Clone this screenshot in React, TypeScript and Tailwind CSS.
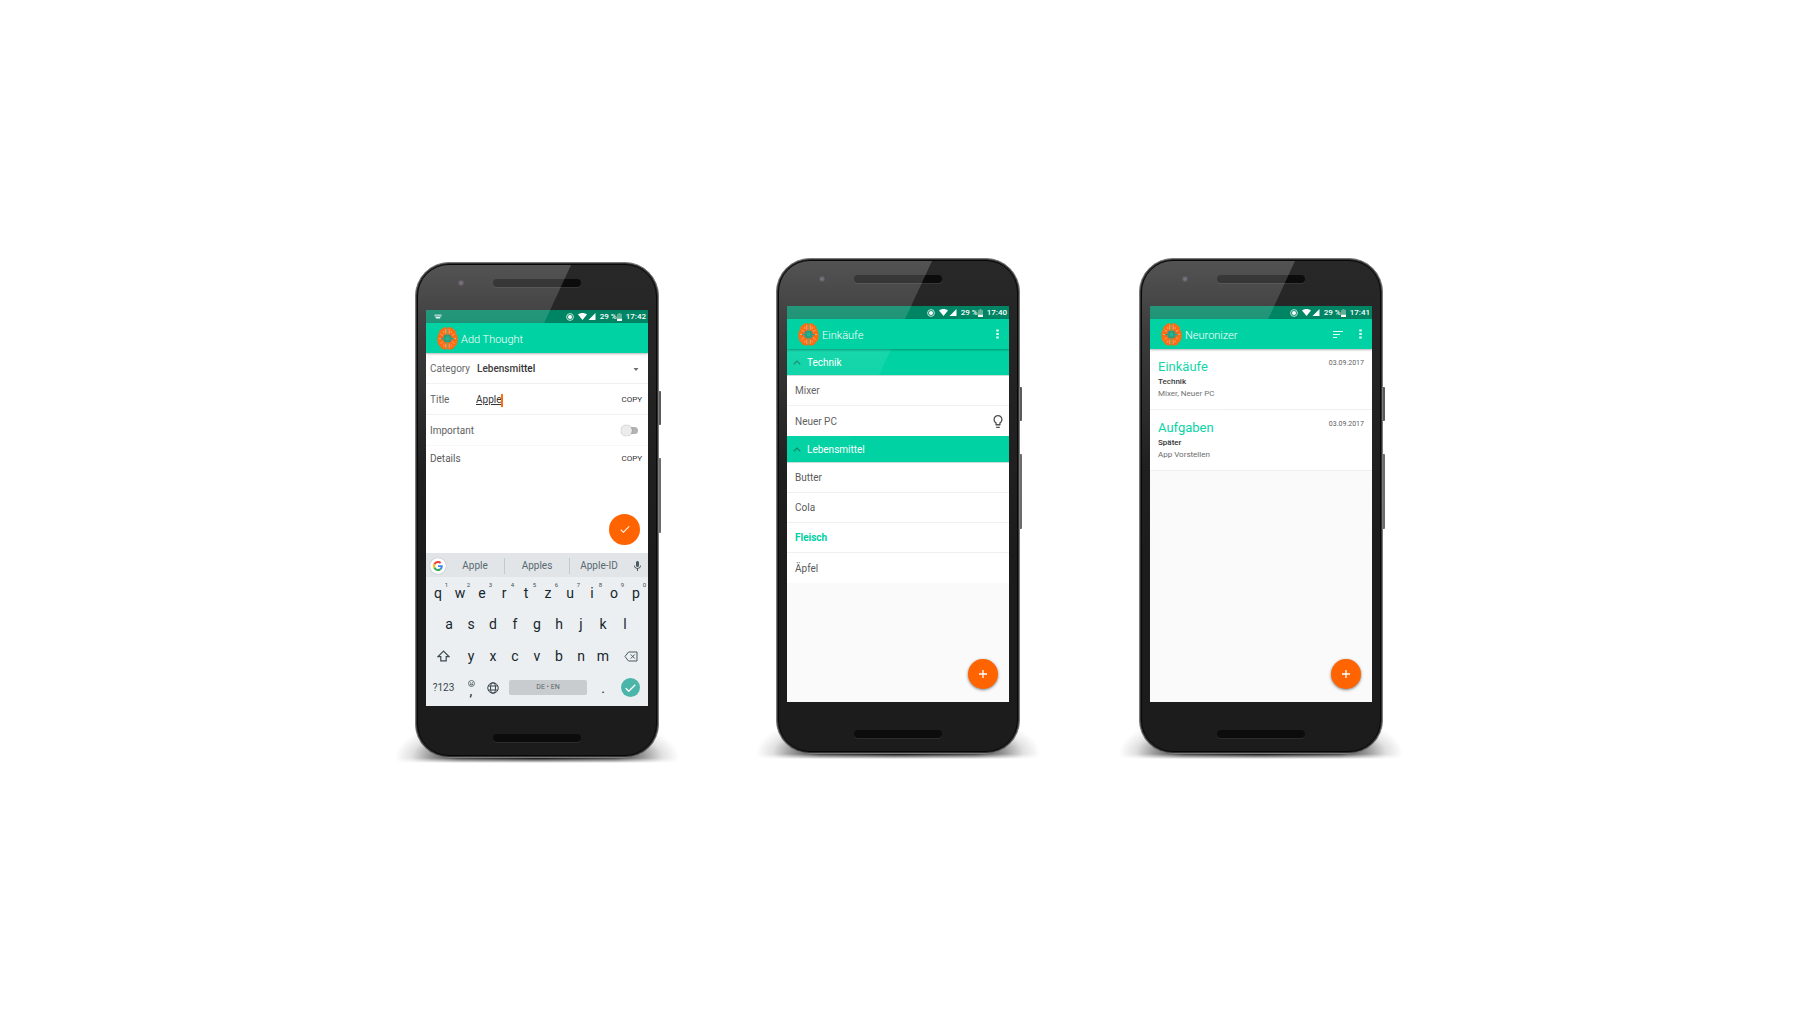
import type { ReactNode } from "react";

function BrainLogo() {
  return (
    <svg viewBox="0 0 42 46" className="h-[23px] w-[21px] shrink-0" aria-hidden="true">
      <path d="M20.500 1.500C17-.5 12 .5 10 4 6 5.500 4 9 4 13 1 17 0 23 1 28c0 5 2 9 5.500 10.500C8 43 12 45.500 16 45c2.500.5 4.500-.5 4.500-2z" fill="#ff6c12" />
      <path d="M21.500 1.500C25-.5 30 .5 32 4c4 1.500 6 5 6 9 3 4 4 10 3 15 0 5-2 9-5.500 10.500C34 43 30 45.500 26 45c-2.500.5-4.500-.5-4.500-2z" fill="#ff6c12" />
      <g stroke="#f6c09a" strokeWidth="1.300" fill="none">
        <path d="M17.500 14V4M13.500 12V8M24.500 14V4M28.500 12V8M17.500 33v9M24.500 33v9M13.500 35v4M28.500 35v4" />
        <path d="M12 17L7 14M9 23H4M12 29l-5 4M30 17l5-3M33 23h5M30 29l5 4" />
      </g>
      <path
        d="M15 20h-4M15 26h-4M27 20h4M27 26h4M18 17v-4M24 17v-4M18 29v4M24 29v4"
        stroke="#3a9c80"
        strokeWidth="1.600"
      />
      <path d="M8 23h6M28 23h6" stroke="#3a9c80" strokeWidth="2.500" />
      <rect x="14" y="16" width="14" height="14" rx="2" fill="#2a9d82" />
      <rect x="17.500" y="19.500" width="7" height="7" fill="#22b593" />
    </svg>
  );
}

function StatusBar({ time, keyboard = false }: { time: string; keyboard?: boolean }) {
  return (
    <div className="flex h-[13px] items-center bg-[#008564] pr-[2px] pl-2 text-[8px] leading-[13px] font-medium text-white">
      {keyboard && (
        <svg viewBox="0 0 16 12" className="h-[6px] w-[8px]" aria-hidden="true">
          <path d="M1 1h14v4H1z" fill="#b9dcd2" />
          <path d="M2 3h12" stroke="#258f74" strokeWidth="1" strokeDasharray="1.500 1" />
          <path d="M3 6h10l-1 3H4z" fill="#e6f5f1" />
        </svg>
      )}
      <svg viewBox="0 0 16 16" className="mr-[4px] ml-auto h-[8px] w-[8px]" aria-hidden="true">
        <circle cx="8" cy="8" r="6.800" fill="none" stroke="#d5ece6" strokeWidth="1.800" />
        <circle cx="8" cy="8" r="4" fill="#fff" />
      </svg>
      <svg viewBox="0 0 18 14" className="mr-[1px] h-[7px] w-[9px]" aria-hidden="true">
        <path d="M0 3C5-1 13-1 18 3L9 14z" fill="#fff" />
      </svg>
      <svg viewBox="0 0 14 14" className="mr-[4px] h-[7px] w-[8px]" aria-hidden="true">
        <path d="M14 0v14H0z" fill="#fff" />
      </svg>
      <span>29 %</span>
      <svg viewBox="0 0 10 16" className="mr-[4px] h-[8px] w-[5px]" aria-hidden="true">
        <path d="M3 0h4v2h3v8H0V2h3z" fill="#5fae9a" />
        <path d="M0 11h10v5H0z" fill="#fff" />
      </svg>
      <span>{time}</span>
    </div>
  );
}

function AppBar({ title, children }: { title: string; children?: ReactNode }) {
  return (
    <header className="relative z-10 flex h-[30px] items-center bg-[#00d2a3] pr-[9px] pl-[11px] shadow-[0_1px_2px_rgba(0,0,0,0.3)]">
      <BrainLogo />
      <h1 className="ml-[3px] flex-1 pt-[4px] text-[11px] leading-4 font-light text-white">{title}</h1>
      {children}
    </header>
  );
}

function MoreButton() {
  return (
    <button type="button" aria-label="More options" className="flex h-4 w-[6px] items-center justify-center">
      <svg viewBox="0 0 6 20" className="h-[10px] w-[3px]" aria-hidden="true">
        <path d="M.5 1h5v4h-5zM.5 8h5v4h-5zM.5 15h5v4h-5z" fill="#e8fbf6" />
      </svg>
    </button>
  );
}

function AddButton() {
  return (
    <button
      type="button"
      aria-label="Add"
      className="absolute right-[11px] bottom-[13px] flex size-[30px] items-center justify-center rounded-full bg-[#ff6400] shadow-[0_1px_3px_rgba(0,0,0,0.5)]"
    >
      <svg viewBox="0 0 16 16" className="size-[8px]" aria-hidden="true">
        <path d="M8 0v16M0 8h16" stroke="#fff" strokeWidth="2.600" />
      </svg>
    </button>
  );
}

function Speaker() {
  return (
    <div className="h-[8px] w-[88px] rounded-full bg-[#0c0c0c] bg-[radial-gradient(#202020_40%,transparent_45%)] bg-[size:2px_2px] shadow-[0_1px_0_rgba(255,255,255,0.08)]" />
  );
}

function Phone({ className, children }: { className: string; children: ReactNode }) {
  return (
    <section className={`relative isolate w-[244px] shrink-0 ${className}`}>
      <div className="absolute inset-x-[-20px] bottom-[-5px] -z-10 h-[50px] bg-[radial-gradient(ellipse_50%_100%_at_50%_90%,rgba(0,0,0,0.95)_0%,rgba(0,0,0,0.75)_55%,rgba(0,0,0,0.4)_75%,rgba(0,0,0,0.12)_88%,transparent_100%)] [mask-image:linear-gradient(to_bottom,transparent,black_75%,black_90%,transparent)]" />
      <div className="absolute top-[129px] -right-[2px] -z-10 h-[34px] w-[6px] rounded-r-[1px] bg-[#5c5a5c]" />
      <div className="absolute top-[196px] -right-[2px] -z-10 h-[75px] w-[6px] rounded-r-[1px] bg-[#6d6b6d]" />
      <div className="relative overflow-hidden rounded-[34px] border border-[#7a7a7a] bg-[#333333] p-px">
        <div className="flex flex-col rounded-[32px] border border-[#080808] bg-linear-to-b from-[#282828] to-[#1c1c1c] to-60% px-[8px]">
          <div className="flex h-[45px] items-start justify-center pt-[14px]">
            <Speaker />
            <span className="absolute top-[17px] left-[42px] size-[6px] rounded-full bg-[radial-gradient(#5b5368_25%,#3a353a_60%)]" />
          </div>
          <div className="relative flex h-[396px] flex-col overflow-hidden">{children}</div>
          <div className="flex h-[49px] items-center justify-center pt-[14px]">
            <Speaker />
          </div>
        </div>
        <div className="pointer-events-none absolute inset-[2px] rounded-[31px] bg-linear-to-b from-white/20 via-white/10 via-16% to-transparent to-42% [clip-path:polygon(0_0,153px_0,0_330px)]" />
      </div>
    </section>
  );
}

function CopyButton({ label }: { label: string }) {
  return (
    <button type="button" aria-label={label} className="ml-auto text-[8px] leading-3 text-[#333333]">
      COPY
    </button>
  );
}

function Key({ children, hint }: { children: string; hint?: string }) {
  return (
    <button type="button" className="relative flex w-[22px] items-center justify-center text-[14px] leading-4 text-[#15262d]">
      {children}
      {hint && <span className="absolute -top-[4px] right-px text-[6px] leading-[7px] text-[#3f4d53]">{hint}</span>}
    </button>
  );
}

function Keyboard() {
  return (
    <div className="mt-auto flex h-[153px] flex-col bg-[#eceff1] text-[#37474f]">
      <div className="flex h-[24px] items-center bg-[#e1e5e8] pt-px pr-[7px] pl-[4px] text-[10px] leading-4 text-[#5a6970]">
        <button
          type="button"
          aria-label="Google search"
          className="flex size-[16px] items-center justify-center rounded-full bg-white shadow-[0_0_1px_rgba(0,0,0,0.4)]"
        >
          <svg viewBox="0 0 48 48" className="size-[10px]" aria-hidden="true">
            <path fill="#EA4335" d="M24 9.500c3.540 0 6.710 1.220 9.210 3.600l6.850-6.850C35.900 2.380 30.470 0 24 0 14.620 0 6.510 5.380 2.560 13.220l7.980 6.190C12.430 13.720 17.740 9.500 24 9.500z" />
            <path fill="#4285F4" d="M46.980 24.550c0-1.570-.15-3.090-.38-4.550H24v9.020h12.940c-.58 2.960-2.260 5.480-4.780 7.180l7.730 6c4.510-4.180 7.090-10.360 7.090-17.650z" />
            <path fill="#FBBC05" d="M10.530 28.590c-.48-1.450-.76-2.990-.76-4.590s.27-3.140.76-4.590l-7.980-6.190C.92 16.460 0 20.120 0 24c0 3.880.92 7.540 2.560 10.780l7.970-6.190z" />
            <path fill="#34A853" d="M24 48c6.480 0 11.930-2.130 15.890-5.810l-7.730-6c-2.150 1.450-4.920 2.300-8.160 2.300-6.260 0-11.570-4.220-13.470-9.910l-7.980 6.190C6.510 42.620 14.620 48 24 48z" />
          </svg>
        </button>
        <div className="flex flex-1 divide-x divide-[#c3c9cd] text-center">
          <button type="button" className="w-[59px]">Apple</button>
          <button type="button" className="w-[65px]">Apples</button>
          <button type="button" className="w-[58px]">Apple-ID</button>
        </div>
        <button type="button" aria-label="Voice input">
          <svg viewBox="5 2 14 20" className="h-[10px] w-[7px]" fill="#4b5a61" aria-hidden="true">
            <path d="M12 14c1.660 0 3-1.340 3-3V5c0-1.660-1.340-3-3-3S9 3.340 9 5v6c0 1.660 1.340 3 3 3z" />
            <path d="M17.300 11c0 3-2.540 5.100-5.300 5.100S6.700 14 6.700 11H5c0 3.410 2.720 6.230 6 6.720V22h2v-4.280c3.280-.48 6-3.300 6-6.720h-1.700z" />
          </svg>
        </button>
      </div>
      <div className="flex h-[31px] items-center justify-center">
        {"qwertzuiop".split("").map((letter, i) => (
          <Key key={letter} hint={String((i + 1) % 10)}>
            {letter}
          </Key>
        ))}
      </div>
      <div className="flex h-[32px] items-center justify-center">
        {"asdfghjkl".split("").map((letter) => (
          <Key key={letter}>{letter}</Key>
        ))}
      </div>
      <div className="flex h-[32px] items-center justify-center">
        <button type="button" aria-label="Shift" className="flex w-[33px] justify-center">
          <svg viewBox="0 0 24 22" className="h-[12px] w-[13px]" fill="none" stroke="#3c4b52" strokeWidth="2.200" aria-hidden="true">
            <path d="M12 2L2 12h5v8h10v-8h5z" />
          </svg>
        </button>
        {"yxcvbnm".split("").map((letter) => (
          <Key key={letter}>{letter}</Key>
        ))}
        <button type="button" aria-label="Backspace" className="flex w-[33px] justify-center">
          <svg viewBox="0 0 28 22" className="h-[11px] w-[14px]" fill="none" stroke="#4b5a61" strokeWidth="2" aria-hidden="true">
            <path d="M9 2h17v18H9L2 11zM13.500 7l8 8M21.500 7l-8 8" />
          </svg>
        </button>
      </div>
      <div className="flex h-[31px] items-center justify-center">
        <button type="button" className="w-[33px] text-center text-[10px] leading-4">?123</button>
        <button type="button" className="flex w-[22px] flex-col items-center text-[14px] leading-[8px] text-[#15262d]">
          <svg viewBox="0 0 16 16" className="h-[7px] w-[7px]" fill="none" stroke="#46555c" strokeWidth="1.800" aria-hidden="true">
            <circle cx="8" cy="8" r="6.800" />
            <path d="M4.500 9c1.500 3.500 5.500 3.500 7 0zM5.500 5v1.500M10.500 5v1.500" />
          </svg>
          <span>,</span>
        </button>
        <button type="button" aria-label="Switch language" className="flex w-[22px] justify-center">
          <svg viewBox="0 0 24 24" className="size-[12px]" fill="none" stroke="#37464d" strokeWidth="2" aria-hidden="true">
            <circle cx="12" cy="12" r="10.500" />
            <ellipse cx="12" cy="12" rx="5" ry="10.500" />
            <path d="M2.500 8h19M2.500 16h19" />
          </svg>
        </button>
        <div className="flex w-[88px] justify-center">
          <button type="button" className="h-[15px] w-[78px] rounded-[2px] bg-[#c8ccce] text-[7px] leading-[15px] text-[#5b676c]">
            DE • EN
          </button>
        </div>
        <Key>.</Key>
        <div className="flex w-[33px] justify-center">
          <button type="button" aria-label="Done" className="flex size-[19px] items-center justify-center rounded-full bg-[#4bb5aa]">
            <svg viewBox="0 0 22 16" className="h-[8px] w-[11px]" fill="none" stroke="#fff" strokeWidth="2.600" aria-hidden="true">
              <path d="M1.500 8.500l6 6L20.500 1.500" />
            </svg>
          </button>
        </div>
      </div>
    </div>
  );
}

function AddThoughtScreen() {
  return (
    <div className="flex flex-1 flex-col bg-white text-[10px] leading-4 text-[#5a5a5a]">
      <StatusBar time="17:42" keyboard />
      <AppBar title="Add Thought" />
      <div className="flex h-[31px] items-center border-b border-[#f0f0f0] pt-[2px] pr-[9px] pl-[4px]">
        <label htmlFor="category" className="w-[47px]">Category</label>
        <select id="category" defaultValue="Lebensmittel" className="flex-1 appearance-none bg-transparent font-medium text-[#2b2b2b]">
          <option>Lebensmittel</option>
          <option>Technik</option>
        </select>
        <svg viewBox="0 0 10 6" className="h-[3px] w-[6px]" aria-hidden="true">
          <path d="M0 0h10L5 6z" fill="#6d6d6d" />
        </svg>
      </div>
      <div className="flex h-[31px] items-center border-b border-[#f0f0f0] pt-[2px] pr-[6px] pl-[4px]">
        <label htmlFor="title" className="w-[46px]">Title</label>
        <input
          id="title"
          type="text"
          defaultValue="Apple"
          className="h-4 field-sizing-content text-[#2b2b2b] underline outline-none"
        />
        <span className="-ml-px h-[13px] w-[2px] shrink-0 bg-[#ff6400]" />
        <CopyButton label="Copy title" />
      </div>
      <div className="flex h-[30px] items-center pt-px pr-[10px] pl-[4px]">
        <label htmlFor="important" className="flex-1">Important</label>
        <input
          id="important"
          type="checkbox"
          role="switch"
          className="relative h-[7px] w-[16px] appearance-none rounded-full bg-[#b2b2b2] before:absolute before:-top-[2px] before:-left-[1px] before:size-[11px] before:rounded-full before:bg-[#ececec] before:shadow-[0_0_1px_rgba(0,0,0,0.5)] before:content-['']"
        />
      </div>
      <div className="flex h-[25px] items-center border-t border-[#f8f8f8] pt-px pr-[6px] pl-[4px]">
        <h2>Details</h2>
        <CopyButton label="Copy details" />
      </div>
      <button
        type="button"
        aria-label="Save"
        className="mt-[44px] mr-[8px] flex size-[31px] items-center justify-center self-end rounded-full bg-[#ff6400]"
      >
        <svg viewBox="0 0 20 15" className="h-[7px] w-[10px]" fill="none" stroke="#fff" strokeWidth="2.200" aria-hidden="true">
          <path d="M1 8l5.500 5.500L19 1" />
        </svg>
      </button>
      <Keyboard />
    </div>
  );
}

type Item = { name: string; important?: boolean; idea?: boolean };

const categories: { name: string; items: Item[] }[] = [
  { name: "Technik", items: [{ name: "Mixer" }, { name: "Neuer PC", idea: true }] },
  {
    name: "Lebensmittel",
    items: [{ name: "Butter" }, { name: "Cola" }, { name: "Fleisch", important: true }, { name: "Äpfel" }],
  },
];

function ShoppingScreen() {
  return (
    <div className="flex flex-1 flex-col bg-[#fafafa] text-[10px] leading-4">
      <StatusBar time="17:40" />
      <AppBar title="Einkäufe">
        <MoreButton />
      </AppBar>
      {categories.map((category) => (
        <div key={category.name}>
          <button
            type="button"
            aria-expanded="true"
            className="flex h-[27px] w-full items-center border-b border-[#c9dcd6] bg-[#00d2a3] pt-[2px] pl-[6px] text-white"
          >
            <svg viewBox="0 0 16 10" className="mr-[6px] mb-[2px] h-[5px] w-[8px]" fill="none" stroke="#0b8468" strokeWidth="2.200" aria-hidden="true">
              <path d="M1.500 8.500L8 2l6.500 6.500" />
            </svg>
            {category.name}
          </button>
          <ul className="divide-y divide-[#f0f0f0] bg-white text-[#5a5a5a]">
            {category.items.map((item) => (
              <li key={item.name} className="flex h-[30px] items-center justify-between pt-px pr-[6px] pl-[8px]">
                {item.important ? <strong className="text-[#00cf9f]">{item.name}</strong> : item.name}
                {item.idea && (
                  <svg viewBox="5 2 14 20" className="h-[13px] w-[10px]" fill="#4f4f4f" aria-hidden="true">
                    <path d="M9 21c0 .55.45 1 1 1h4c.55 0 1-.45 1-1v-1H9v1zm3-19C8.140 2 5 5.140 5 9c0 2.380 1.190 4.470 3 5.740V17c0 .55.45 1 1 1h6c.55 0 1-.45 1-1v-2.260c1.810-1.270 3-3.360 3-5.740 0-3.860-3.140-7-7-7zm2.850 11.100l-.85.6V16h-4v-2.300l-.85-.6C7.800 12.160 7 10.630 7 9c0-2.760 2.240-5 5-5s5 2.240 5 5c0 1.630-.8 3.160-2.150 4.100z" />
                  </svg>
                )}
              </li>
            ))}
          </ul>
        </div>
      ))}
      <AddButton />
    </div>
  );
}

const lists = [
  { title: "Einkäufe", category: "Technik", preview: "Mixer, Neuer PC", date: "03.09.2017" },
  { title: "Aufgaben", category: "Später", preview: "App Vorstellen", date: "03.09.2017" },
];

function OverviewScreen() {
  return (
    <div className="flex flex-1 flex-col bg-[#fafafa]">
      <StatusBar time="17:41" />
      <AppBar title="Neuronizer">
        <button type="button" aria-label="Sort" className="mr-[14px]">
          <svg viewBox="0 0 20 14" className="h-[7px] w-[10px]" aria-hidden="true">
            <path d="M0 1h20M0 7h14M0 13h8" stroke="#e8fbf6" strokeWidth="2" />
          </svg>
        </button>
        <MoreButton />
      </AppBar>
      {lists.map((list) => (
        <article key={list.title} className="flex h-[61px] justify-between border-b border-[#efefef] bg-white pt-[10px] pr-[8px] pl-[8px]">
          <div>
            <h2 className="text-[13px] leading-4 text-[#00d2a3]">{list.title}</h2>
            <p className="text-[8px] leading-[14px] font-medium text-[#2e2e2e]">{list.category}</p>
            <p className="text-[8px] leading-[10px] text-[#6a6a6a]">{list.preview}</p>
          </div>
          <time dateTime="2017-09-03" className="text-[7px] leading-[8px] text-[#5e5e5e]">{list.date}</time>
        </article>
      ))}
      <AddButton />
    </div>
  );
}

export default function App() {
  return (
    <main className="flex min-h-screen items-center justify-center bg-white pr-[2px] pb-px font-['Roboto','Liberation_Sans',sans-serif]">
      <Phone className="mt-[8px] mr-[117px]">
        <AddThoughtScreen />
      </Phone>
      <Phone className="mr-[119px]">
        <ShoppingScreen />
      </Phone>
      <Phone className="">
        <OverviewScreen />
      </Phone>
    </main>
  );
}
